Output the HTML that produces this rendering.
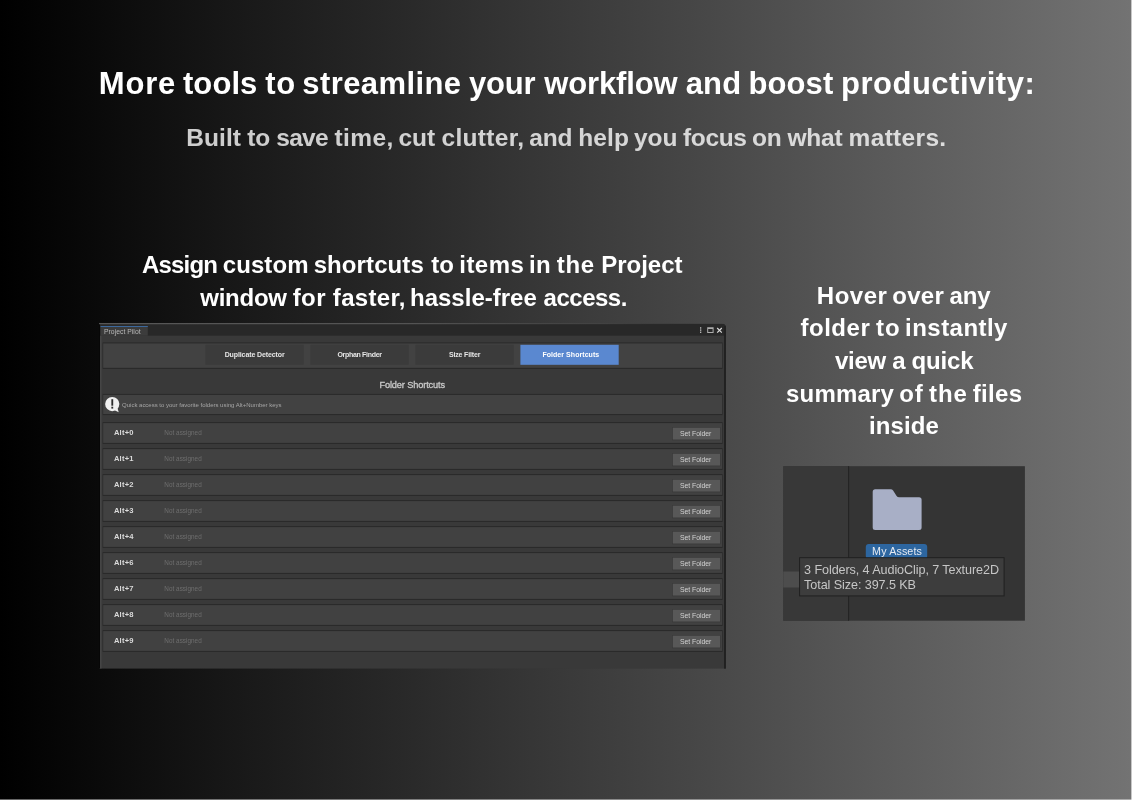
<!DOCTYPE html>
<html>
<head>
<meta charset="utf-8">
<title>More tools</title>
<style>
html,body{margin:0;padding:0;}
body{width:1132px;height:800px;overflow:hidden;position:relative;
  font-family:"Liberation Sans",sans-serif;background:#3a3a3a;}
#page{position:absolute;left:0;top:0;width:1132px;height:800px;overflow:hidden;will-change:transform;
  background:linear-gradient(90deg,#000 0%,#737373 100%);}
.abs{position:absolute;}
svg{overflow:visible;display:block;}
svg text{white-space:pre;}
.t{position:absolute;left:0;white-space:pre;font-weight:700;color:#fff;line-height:1;}
.t span{position:absolute;top:0;white-space:pre;}
.edge-b{left:0;top:799px;width:1132px;height:1px;background:rgba(255,255,255,.4);}
.edge-r{left:1131px;top:0;width:1px;height:800px;background:rgba(255,255,255,.6);}
</style>
</head>
<body>
<div id="page">

<!-- headings -->
<div class="t" id="h1" style="top:68.06px;font-size:31px;color:#fff;"><span style="left:98.84px;letter-spacing:0.801px">More </span><span style="left:182.97px;letter-spacing:0.082px">tools </span><span style="left:265.27px;letter-spacing:0.596px">to </span><span style="left:302.32px;letter-spacing:0.401px">streamline </span><span style="left:469.02px;letter-spacing:-0.208px">your </span><span style="left:544.27px;letter-spacing:-0.128px">workflow </span><span style="left:685.70px;letter-spacing:0.147px">and </span><span style="left:748.45px;letter-spacing:0.107px">boost </span><span style="left:841.03px;letter-spacing:0.501px">productivity:</span></div>
<div class="t" id="h2" style="top:125.56px;font-size:24.5px;color:rgba(255,255,255,.79);"><span style="left:186.22px;letter-spacing:0.083px">Built </span><span style="left:247.35px;letter-spacing:-0.137px">to </span><span style="left:276.32px;letter-spacing:-0.762px">save </span><span style="left:334.55px;letter-spacing:0.364px">time, </span><span style="left:398.40px;letter-spacing:0.057px">cut </span><span style="left:441.50px;letter-spacing:0.322px">clutter, </span><span style="left:529.36px;letter-spacing:-0.269px">and </span><span style="left:578.26px;letter-spacing:0.102px">help </span><span style="left:633.96px;letter-spacing:-0.002px">you </span><span style="left:682.93px;letter-spacing:-0.317px">focus </span><span style="left:752.00px;letter-spacing:-0.278px">on </span><span style="left:787.46px;letter-spacing:-0.222px">what </span><span style="left:848.62px;letter-spacing:0.314px">matters.</span></div>
<div class="t" id="l1" style="top:252.98px;font-size:24px;color:#fff;"><span style="left:141.90px;letter-spacing:-0.800px">Assign </span><span style="left:222.80px;letter-spacing:0.072px">custom </span><span style="left:313.64px;letter-spacing:0.103px">shortcuts </span><span style="left:431.15px;letter-spacing:0.047px">to </span><span style="left:459.29px;letter-spacing:0.458px">items </span><span style="left:528.99px;letter-spacing:0.392px">in </span><span style="left:556.75px;letter-spacing:0.735px">the </span><span style="left:601.15px;letter-spacing:0.010px">Project</span></div>
<div class="t" id="l2" style="top:285.98px;font-size:24px;color:#fff;"><span style="left:200.26px;letter-spacing:-0.246px">window </span><span style="left:292.65px;letter-spacing:0.480px">for </span><span style="left:332.85px;letter-spacing:0.318px">faster, </span><span style="left:409.99px;letter-spacing:0.006px">hassle-free </span><span style="left:543.58px;letter-spacing:-0.493px">access.</span></div>
<div class="t" id="r1" style="top:283.98px;font-size:24px;color:#fff;"><span style="left:816.85px;letter-spacing:0.486px">Hover </span><span style="left:892.20px;letter-spacing:0.320px">over </span><span style="left:949.58px;letter-spacing:-0.178px">any</span></div>
<div class="t" id="r2" style="top:315.98px;font-size:24px;color:#fff;"><span style="left:800.45px;letter-spacing:0.525px">folder </span><span style="left:876.06px;letter-spacing:0.900px">to </span><span style="left:905.09px;letter-spacing:0.461px">instantly</span></div>
<div class="t" id="r3" style="top:348.98px;font-size:24px;color:#fff;"><span style="left:834.97px;letter-spacing:-0.269px">view </span><span style="left:892.18px;letter-spacing:0.000px">a </span><span style="left:911.50px;letter-spacing:-0.137px">quick</span></div>
<div class="t" id="r4" style="top:381.98px;font-size:24px;color:#fff;"><span style="left:786.04px;letter-spacing:0.191px">summary </span><span style="left:899.20px;letter-spacing:0.900px">of </span><span style="left:929.08px;letter-spacing:0.900px">the </span><span style="left:972.85px;letter-spacing:0.280px">files</span></div>
<div class="t" id="r5" style="top:413.98px;font-size:24px;color:#fff;"><span style="left:868.89px;letter-spacing:0.142px">inside</span></div>

<!-- editor window -->
<svg class="abs" style="left:95px;top:318px" width="640" height="356" viewBox="95 318 640 356" font-family="Liberation Sans, sans-serif">
<defs><clipPath id="wc"><path d="M99 323.7 H722 Q726 323.7 726 327.7 V668.8 H99 Z"/></clipPath><linearGradient id="tl" x1="0" x2="1" y1="0" y2="0"><stop offset="0" stop-color="#5e5e5e"/><stop offset=".5" stop-color="#585858"/><stop offset=".8" stop-color="#4a4a4a" stop-opacity=".6"/><stop offset=".95" stop-color="#333" stop-opacity="0"/></linearGradient></defs>
<g clip-path="url(#wc)">
<rect x="99" y="323.7" width="627" height="345.1" fill="#393939"/>
<rect x="99" y="323.7" width="627" height="12" fill="#282828"/>
<rect x="100.6" y="326" width="47.2" height="9.7" fill="#3c3c3c"/>
<rect x="100.6" y="326" width="47.2" height="0.8" fill="#3d74b4"/>
<text x="104" y="334" font-size="6.8" font-weight="400" fill="#b8b8b8" text-anchor="start" textLength="36.6" lengthAdjust="spacing">Project Pilot</text>
<rect x="700" y="327.3" width="1.3" height="1.3" fill="#c8c8c8"/><rect x="700" y="329.45" width="1.3" height="1.3" fill="#c8c8c8"/><rect x="700" y="331.6" width="1.3" height="1.3" fill="#c8c8c8"/>
<path d="M707.2 327.3 H713.6 V332.9 H707.2 Z M708.2 329 V332 H712.6 V329 Z" fill="#adadad" fill-rule="evenodd"/>
<path d="M717.2 328 L721.8 332.7 M721.8 328 L717.2 332.7" stroke="#dcdcdc" stroke-width="1.15" fill="none"/>
<rect x="102.6" y="342.4" width="620" height="26.5" fill="#2a2a2a"/><rect x="103.2" y="343.4" width="618.8" height="24.4" fill="#424242"/>
<rect x="205.4" y="344.8" width="98.3" height="20" fill="#3b3b3b"/>
<text x="224.65" y="357.1" font-size="7" font-weight="700" fill="#e6e6e6" text-anchor="start" textLength="60.1" lengthAdjust="spacing">Duplicate Detector</text>
<rect x="310.4" y="344.8" width="98.3" height="20" fill="#3b3b3b"/>
<text x="337.4" y="357.1" font-size="7" font-weight="700" fill="#e6e6e6" text-anchor="start" textLength="44.6" lengthAdjust="spacing">Orphan Finder</text>
<rect x="415.4" y="344.8" width="98.3" height="20" fill="#3b3b3b"/>
<text x="448.95" y="357.1" font-size="7" font-weight="700" fill="#e6e6e6" text-anchor="start" textLength="31.5" lengthAdjust="spacing">Size Filter</text>
<rect x="520.4" y="344.8" width="98.3" height="20" fill="#5a88d0"/>
<text x="542.4" y="357.1" font-size="7" font-weight="700" fill="#ffffff" text-anchor="start" textLength="56.8" lengthAdjust="spacing">Folder Shortcuts</text>
<text x="379.4" y="387.9" font-size="9.2" font-weight="400" fill="#cacaca" text-anchor="start" textLength="65.7" lengthAdjust="spacing" stroke="#cacaca" stroke-width=".3">Folder Shortcuts</text>
<rect x="102.6" y="393.9" width="620" height="21.2" fill="#2a2a2a"/><rect x="103.2" y="394.9" width="618.8" height="19.1" fill="#424242"/>
<g fill="#f0f0f0"><circle cx="112.25" cy="404.1" r="7.1"/><path d="M114.6 410.2 L118.7 412.2 L117.5 408 Z"/></g>
<rect x="111.35" y="399.2" width="1.85" height="6.5" fill="#2c2c2c"/><rect x="111.35" y="406.7" width="1.85" height="1.9" fill="#2c2c2c"/>
<text x="122.1" y="406.6" font-size="6" font-weight="400" fill="#a6a6a6" text-anchor="start" textLength="159.4" lengthAdjust="spacing">Quick access to your favorite folders using Alt+Number keys</text>
<rect x="102.6" y="422.1" width="620" height="21.9" fill="#2a2a2a"/><rect x="103.2" y="423.1" width="618.8" height="19.8" fill="#414141"/>
<text x="113.9" y="434.6" font-size="7.6" font-weight="700" fill="#dadada" text-anchor="start" textLength="19.7" lengthAdjust="spacing">Alt+0</text>
<text x="164.3" y="434.7" font-size="6.35" font-weight="400" fill="#6e6e6e" text-anchor="start" textLength="37.4" lengthAdjust="spacing">Not assigned</text>
<rect x="672.2" y="427.2" width="48.2" height="13" fill="#343434"/><rect x="672.7" y="427.6" width="47.3" height="12" fill="#585858"/>
<text x="679.9" y="435.9" font-size="6.9" font-weight="400" fill="#d2d2d2" text-anchor="start" textLength="31.4" lengthAdjust="spacing">Set Folder</text>
<rect x="102.6" y="448.1" width="620" height="21.9" fill="#2a2a2a"/><rect x="103.2" y="449.1" width="618.8" height="19.8" fill="#414141"/>
<text x="113.9" y="460.6" font-size="7.6" font-weight="700" fill="#dadada" text-anchor="start" textLength="19.7" lengthAdjust="spacing">Alt+1</text>
<text x="164.3" y="460.7" font-size="6.35" font-weight="400" fill="#6e6e6e" text-anchor="start" textLength="37.4" lengthAdjust="spacing">Not assigned</text>
<rect x="672.2" y="453.2" width="48.2" height="13" fill="#343434"/><rect x="672.7" y="453.6" width="47.3" height="12" fill="#585858"/>
<text x="679.9" y="461.9" font-size="6.9" font-weight="400" fill="#d2d2d2" text-anchor="start" textLength="31.4" lengthAdjust="spacing">Set Folder</text>
<rect x="102.6" y="474.1" width="620" height="21.9" fill="#2a2a2a"/><rect x="103.2" y="475.1" width="618.8" height="19.8" fill="#414141"/>
<text x="113.9" y="486.6" font-size="7.6" font-weight="700" fill="#dadada" text-anchor="start" textLength="19.7" lengthAdjust="spacing">Alt+2</text>
<text x="164.3" y="486.7" font-size="6.35" font-weight="400" fill="#6e6e6e" text-anchor="start" textLength="37.4" lengthAdjust="spacing">Not assigned</text>
<rect x="672.2" y="479.2" width="48.2" height="13" fill="#343434"/><rect x="672.7" y="479.6" width="47.3" height="12" fill="#585858"/>
<text x="679.9" y="487.9" font-size="6.9" font-weight="400" fill="#d2d2d2" text-anchor="start" textLength="31.4" lengthAdjust="spacing">Set Folder</text>
<rect x="102.6" y="500.1" width="620" height="21.9" fill="#2a2a2a"/><rect x="103.2" y="501.1" width="618.8" height="19.8" fill="#414141"/>
<text x="113.9" y="512.6" font-size="7.6" font-weight="700" fill="#dadada" text-anchor="start" textLength="19.7" lengthAdjust="spacing">Alt+3</text>
<text x="164.3" y="512.7" font-size="6.35" font-weight="400" fill="#6e6e6e" text-anchor="start" textLength="37.4" lengthAdjust="spacing">Not assigned</text>
<rect x="672.2" y="505.2" width="48.2" height="13" fill="#343434"/><rect x="672.7" y="505.6" width="47.3" height="12" fill="#585858"/>
<text x="679.9" y="513.9" font-size="6.9" font-weight="400" fill="#d2d2d2" text-anchor="start" textLength="31.4" lengthAdjust="spacing">Set Folder</text>
<rect x="102.6" y="526.1" width="620" height="21.9" fill="#2a2a2a"/><rect x="103.2" y="527.1" width="618.8" height="19.8" fill="#414141"/>
<text x="113.9" y="538.6" font-size="7.6" font-weight="700" fill="#dadada" text-anchor="start" textLength="19.7" lengthAdjust="spacing">Alt+4</text>
<text x="164.3" y="538.7" font-size="6.35" font-weight="400" fill="#6e6e6e" text-anchor="start" textLength="37.4" lengthAdjust="spacing">Not assigned</text>
<rect x="672.2" y="531.2" width="48.2" height="13" fill="#343434"/><rect x="672.7" y="531.6" width="47.3" height="12" fill="#585858"/>
<text x="679.9" y="539.9" font-size="6.9" font-weight="400" fill="#d2d2d2" text-anchor="start" textLength="31.4" lengthAdjust="spacing">Set Folder</text>
<rect x="102.6" y="552.1" width="620" height="21.9" fill="#2a2a2a"/><rect x="103.2" y="553.1" width="618.8" height="19.8" fill="#414141"/>
<text x="113.9" y="564.6" font-size="7.6" font-weight="700" fill="#dadada" text-anchor="start" textLength="19.7" lengthAdjust="spacing">Alt+6</text>
<text x="164.3" y="564.7" font-size="6.35" font-weight="400" fill="#6e6e6e" text-anchor="start" textLength="37.4" lengthAdjust="spacing">Not assigned</text>
<rect x="672.2" y="557.2" width="48.2" height="13" fill="#343434"/><rect x="672.7" y="557.6" width="47.3" height="12" fill="#585858"/>
<text x="679.9" y="565.9" font-size="6.9" font-weight="400" fill="#d2d2d2" text-anchor="start" textLength="31.4" lengthAdjust="spacing">Set Folder</text>
<rect x="102.6" y="578.1" width="620" height="21.9" fill="#2a2a2a"/><rect x="103.2" y="579.1" width="618.8" height="19.8" fill="#414141"/>
<text x="113.9" y="590.6" font-size="7.6" font-weight="700" fill="#dadada" text-anchor="start" textLength="19.7" lengthAdjust="spacing">Alt+7</text>
<text x="164.3" y="590.7" font-size="6.35" font-weight="400" fill="#6e6e6e" text-anchor="start" textLength="37.4" lengthAdjust="spacing">Not assigned</text>
<rect x="672.2" y="583.2" width="48.2" height="13" fill="#343434"/><rect x="672.7" y="583.6" width="47.3" height="12" fill="#585858"/>
<text x="679.9" y="591.9" font-size="6.9" font-weight="400" fill="#d2d2d2" text-anchor="start" textLength="31.4" lengthAdjust="spacing">Set Folder</text>
<rect x="102.6" y="604.1" width="620" height="21.9" fill="#2a2a2a"/><rect x="103.2" y="605.1" width="618.8" height="19.8" fill="#414141"/>
<text x="113.9" y="616.6" font-size="7.6" font-weight="700" fill="#dadada" text-anchor="start" textLength="19.7" lengthAdjust="spacing">Alt+8</text>
<text x="164.3" y="616.7" font-size="6.35" font-weight="400" fill="#6e6e6e" text-anchor="start" textLength="37.4" lengthAdjust="spacing">Not assigned</text>
<rect x="672.2" y="609.2" width="48.2" height="13" fill="#343434"/><rect x="672.7" y="609.6" width="47.3" height="12" fill="#585858"/>
<text x="679.9" y="617.9" font-size="6.9" font-weight="400" fill="#d2d2d2" text-anchor="start" textLength="31.4" lengthAdjust="spacing">Set Folder</text>
<rect x="102.6" y="630.1" width="620" height="21.9" fill="#2a2a2a"/><rect x="103.2" y="631.1" width="618.8" height="19.8" fill="#414141"/>
<text x="113.9" y="642.6" font-size="7.6" font-weight="700" fill="#dadada" text-anchor="start" textLength="19.7" lengthAdjust="spacing">Alt+9</text>
<text x="164.3" y="642.7" font-size="6.35" font-weight="400" fill="#6e6e6e" text-anchor="start" textLength="37.4" lengthAdjust="spacing">Not assigned</text>
<rect x="672.2" y="635.2" width="48.2" height="13" fill="#343434"/><rect x="672.7" y="635.6" width="47.3" height="12" fill="#585858"/>
<text x="679.9" y="643.9" font-size="6.9" font-weight="400" fill="#d2d2d2" text-anchor="start" textLength="31.4" lengthAdjust="spacing">Set Folder</text>
<rect x="98.2" y="323.7" width="1.8" height="345.1" fill="#070707"/>
<rect x="100.3" y="335.7" width="1.1" height="333.1" fill="#4a4a4a"/>
<rect x="724" y="326" width="1.9" height="342.8" fill="#212121"/>
</g>
<rect x="99" y="323.1" width="627" height="1.1" fill="url(#tl)"/>
</svg>

<!-- folder preview -->
<svg class="abs" style="left:780px;top:462px" width="250" height="164" viewBox="780 462 250 164" font-family="Liberation Sans, sans-serif">
<rect x="783.3" y="466.2" width="241.6" height="154.5" fill="#343434"/>
<rect x="783.3" y="466.2" width="64.9" height="154.5" fill="#383838"/>
<rect x="783.3" y="571.5" width="64.9" height="16" fill="#4d4d4d"/>
<rect x="848" y="466.2" width="1.1" height="154.5" fill="#242424"/>
<path d="M875.2 489.2 H890.6 Q892.2 489.2 893.1 490.5 L896.6 495.9 Q897.5 497.2 899.1 497.2 H919.1 Q921.6 497.2 921.6 499.7 V527.5 Q921.6 530 919.1 530 H875.2 Q872.7 530 872.7 527.5 V491.7 Q872.7 489.2 875.2 489.2 Z" fill="#a8afc6"/>
<rect x="865.8" y="544.1" width="61.4" height="15" rx="3" fill="#2d66a0"/>
<text x="872.1" y="555" font-size="10.7" font-weight="400" fill="#e6ebf2" text-anchor="start" textLength="49.8" lengthAdjust="spacing">My Assets</text>
<rect x="799.1" y="557.2" width="205.5" height="39.2" fill="#202020"/>
<rect x="800.1" y="558.2" width="203.5" height="37.2" fill="#3d3d3d"/>
<text x="804.1" y="573.9" font-size="12.6" font-weight="400" fill="#c6c6c6" text-anchor="start" textLength="194.9" lengthAdjust="spacing">3 Folders, 4 AudioClip, 7 Texture2D</text>
<text x="804.1" y="588.5" font-size="12.6" font-weight="400" fill="#c6c6c6" text-anchor="start" textLength="111.9" lengthAdjust="spacing">Total Size: 397.5 KB</text>
</svg>

<div class="abs edge-b"></div>
<div class="abs edge-r"></div>
</div>
</body>
</html>
